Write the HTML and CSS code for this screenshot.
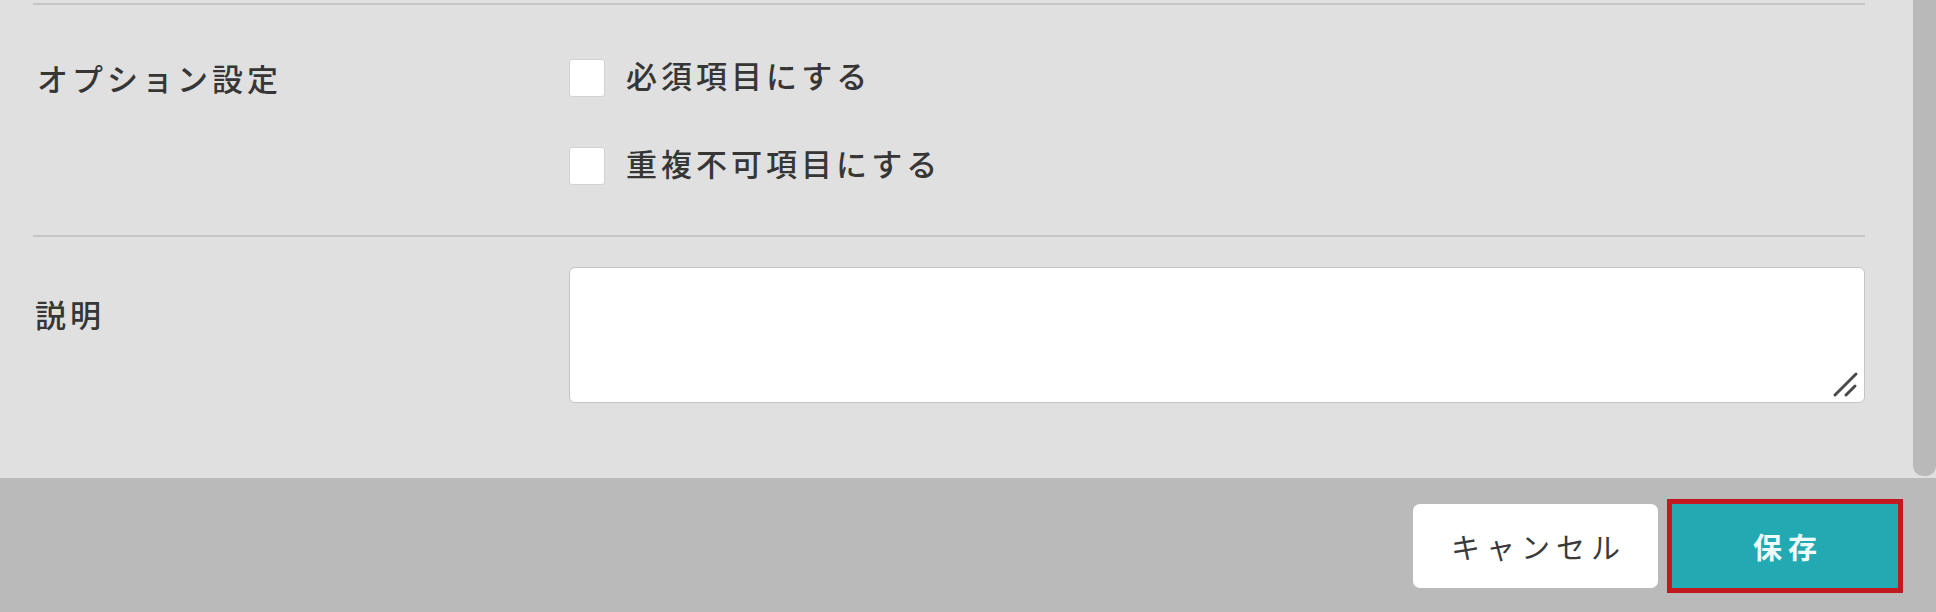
FILE: index.html
```html
<!DOCTYPE html>
<html lang="ja">
<head>
<meta charset="utf-8">
<link rel="stylesheet" href="styles.css">
</head>
<body>
<div class="panel">
  <div class="content">
    <div class="row row-options">
      <div class="label">オプション設定</div>
      <div class="options">
        <label class="option"><span class="check"></span><span class="option-text">必須項目にする</span></label>
        <label class="option"><span class="check"></span><span class="option-text">重複不可項目にする</span></label>
      </div>
    </div>
    <div class="row row-desc">
      <div class="label label-desc">説明</div>
      <div class="field">
        <textarea class="textarea"></textarea>
        <svg class="grip" width="28" height="28" viewBox="0 0 28 28">
          <path d="M3 24 L24 3" stroke="#4a4a4a" stroke-width="3" stroke-linecap="round"/>
          <path d="M14 24 L23 15" stroke="#4a4a4a" stroke-width="3" stroke-linecap="round"/>
        </svg>
      </div>
    </div>
  </div>
  <div class="scrollbar"><div class="thumb"></div></div>
</div>
<div class="footer">
  <button class="btn btn-cancel">キャンセル</button>
  <button class="btn btn-save">保存</button>
</div>
</body>
</html>
```
FILE: styles.css
```css
html, body {
  margin: 0;
  padding: 0;
  width: 1936px;
  height: 612px;
  overflow: hidden;
  font-family: "Noto Sans CJK JP", "Noto Sans", sans-serif;
  color: #363636;
}

.panel {
  display: flex;
  height: 478px;
  background: #e0e0e0;
}

.content {
  flex: 1;
  padding: 3px 48px 0 33px;
}

.row {
  display: grid;
  grid-template-columns: 536px 1fr;
  border-top: 2px solid #c6c6c6;
}

.row-options {
  padding: 54px 0 50px;
}

.row-desc {
  padding: 30px 0 74px;
}

.label {
  font-size: 31px;
  font-weight: 500;
  letter-spacing: 4px;
  line-height: 38px;
  padding-left: 4px;
  white-space: nowrap;
}

.label-desc {
  padding-top: 28px;
  padding-left: 2px;
}

.options {
  display: flex;
  flex-direction: column;
  gap: 50px;
}

.option {
  display: flex;
  align-items: center;
  height: 38px;
}

.check {
  width: 36px;
  height: 38px;
  box-sizing: border-box;
  background: #fff;
  border: 1px solid #d2d2d2;
  border-radius: 3px;
  flex: none;
}

.option-text {
  margin-left: 21px;
  font-size: 31px;
  font-weight: 500;
  letter-spacing: 4px;
  line-height: 38px;
  position: relative;
  top: -3px;
}

.field {
  display: flex;
  position: relative;
}

.textarea {
  width: 100%;
  height: 136px;
  box-sizing: border-box;
  background: #fff;
  border: 1px solid #c4c4c4;
  border-radius: 6px;
  resize: none;
  font-family: inherit;
  outline: none;
  margin: 0;
}

.grip {
  position: absolute;
  right: 5px;
  bottom: 4px;
}

.scrollbar {
  width: 23px;
  background: #e0e0e0;
  display: flex;
}

.thumb {
  flex: 1;
  background: #b9b9b9;
  border-radius: 0 0 10px 10px;
  margin-bottom: 2px;
}

.footer {
  height: 134px;
  background: #bababa;
  display: flex;
  justify-content: flex-end;
  align-items: flex-start;
  gap: 14px;
  padding: 26px 38px 0 0;
  box-sizing: border-box;
}

.btn {
  height: 84px;
  border: none;
  font-family: "Noto Sans CJK JP", "Noto Sans", sans-serif;
  font-size: 29px;
  letter-spacing: 6px;
  padding: 0 0 0 6px;
  margin: 0;
  cursor: pointer;
}

.btn-cancel {
  width: 245px;
  background: #fff;
  color: #3a3a3a;
  font-weight: 400;
  border-radius: 7px;
}

.btn-save {
  width: 226px;
  background: #22a9b1;
  color: #eefcfc;
  font-weight: 700;
  border-radius: 0;
  outline: 5px solid #c21920;
}
```
